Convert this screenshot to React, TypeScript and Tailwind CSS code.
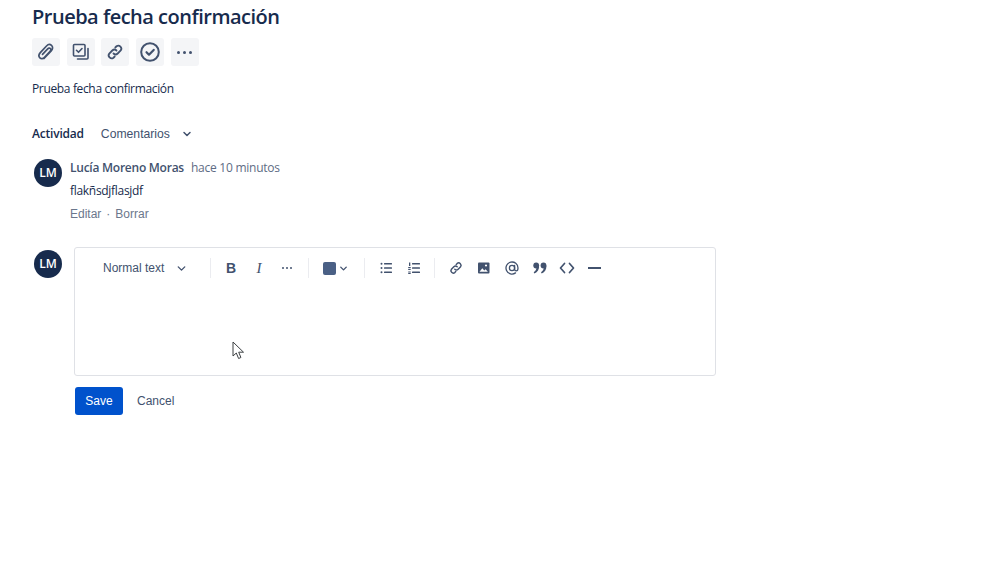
import { ChevronDown } from 'lucide-react';

const sans = { fontFamily: '"Open Sans", sans-serif' };
const arial = { fontFamily: '"Liberation Sans", sans-serif' };

function ActionButton({ children }: { children: React.ReactNode }) {
  return (
    <button className="flex h-[28px] w-[28px] items-center justify-center rounded-[3px] bg-[#f4f5f7] text-[#42526e]">
      {children}
    </button>
  );
}

function Avatar() {
  return (
    <div className="flex h-[28px] w-[28px] shrink-0 items-center justify-center rounded-full bg-[#172b4d] text-[12px] font-semibold text-white">
      LM
    </div>
  );
}

function Divider() {
  return <div className="h-[20px] w-px bg-[#ebecf0]" />;
}

const PaperclipIcon = () => (
  <svg width="20" height="20" viewBox="0 0 20 20" fill="none" stroke="currentColor" strokeWidth="1.7" strokeLinecap="round">
    <path d="M8 16.5l7.2-7.6c1.8-1.9 1.8-4.2.3-5.5-1.5-1.3-3.5-1-5 .6L4.3 10.600c-1.500 1.700-1.700 3.900-.4 5.200 1.300 1.300 3.200 1 4.600-.5l5.600-6c.9-1 1-2.100.3-2.800-.7-.7-1.800-.5-2.700.4L6.500 12.400" />
  </svg>
);

const SubtaskIcon = () => (
  <svg width="20" height="20" viewBox="0 0 20 20" fill="none" stroke="currentColor" strokeWidth="1.6" strokeLinecap="round" strokeLinejoin="round">
    <rect x="2.500" y="2.500" width="11.500" height="11.500" rx="1" />
    <path d="M5.500 8.300l2 2 3.500-3.800" />
    <path d="M17 6.500v9.500a1 1 0 0 1-1 1H6.500" />
  </svg>
);

const LinkIcon = ({ size = 20 }: { size?: number }) => (
  <svg width={size} height={size} viewBox="0 0 20 20" fill="none" stroke="currentColor" strokeWidth="1.8" strokeLinecap="round">
    <path d="M8.500 11.500a3 3 0 0 0 4.200 0l3-3a3 3 0 0 0-4.200-4.200L10.300 5.500" />
    <path d="M11.500 8.500a3 3 0 0 0-4.200 0l-3 3a3 3 0 0 0 4.200 4.200l1.200-1.200" />
  </svg>
);

const CheckCircleIcon = () => (
  <svg width="22" height="22" viewBox="0 0 22 22" fill="none" stroke="currentColor" strokeLinecap="round" strokeLinejoin="round">
    <circle cx="11" cy="11" r="8.800" strokeWidth="2" />
    <path d="M7.500 11.200l2.500 2.500 4.700-4.800" strokeWidth="2.200" />
  </svg>
);

const DotsIcon = ({ size = 3, gap = 3 }: { size?: number; gap?: number }) => (
  <div className="flex items-center" style={{ gap }}>
    {[0, 1, 2].map((i) => (
      <span key={i} className="rounded-full bg-[#42526e]" style={{ width: size, height: size }} />
    ))}
  </div>
);

const BulletListIcon = () => (
  <svg width="16" height="16" viewBox="0 0 16 16" fill="#42526e">
    <circle cx="3.500" cy="3.800" r="1" />
    <circle cx="3.500" cy="8" r="1" />
    <circle cx="3.500" cy="12.200" r="1" />
    <rect x="6" y="3" width="8" height="1.500" rx=".5" />
    <rect x="6" y="7.200" width="8" height="1.500" rx=".5" />
    <rect x="6" y="11.400" width="8" height="1.500" rx=".5" />
  </svg>
);

const NumberListIcon = () => (
  <svg width="16" height="16" viewBox="0 0 16 16" fill="#42526e">
    <rect x="3" y="2.500" width="1.300" height="3.500" />
    <rect x="2.200" y="7" width="2.500" height="1.200" />
    <rect x="2.200" y="9" width="2.500" height="1" />
    <rect x="2.200" y="11.500" width="2.500" height="1" />
    <rect x="2.200" y="13" width="2.500" height="1" />
    <rect x="6" y="3" width="8" height="1.500" rx=".5" />
    <rect x="6" y="7.200" width="8" height="1.500" rx=".5" />
    <rect x="6" y="11.400" width="8" height="1.500" rx=".5" />
  </svg>
);

const ImageIcon = () => (
  <svg width="16" height="16" viewBox="0 0 16 16">
    <rect x="2" y="2.500" width="11.500" height="11" rx="1" fill="#42526e" />
    <path d="M3.500 11.800l2.800-3.600 2 2.300 1.300-1.300 2.300 2.600z" fill="#fff" />
    <circle cx="10" cy="5.500" r="1.100" fill="#fff" />
  </svg>
);

const MentionIcon = () => (
  <svg width="16" height="16" viewBox="0 0 16 16" fill="none" stroke="#42526e" strokeWidth="1.300" strokeLinecap="round">
    <circle cx="8" cy="8" r="2.600" />
    <path d="M10.600 5.500V9c0 1.200.7 1.900 1.600 1.900S14 10 14 8a6 6 0 1 0-2.500 4.900" />
  </svg>
);

const QuoteIcon = () => (
  <svg width="16" height="16" viewBox="0 0 16 16" fill="#42526e">
    <circle cx="4.200" cy="5.500" r="2.900" />
    <path d="M7.100 5.500c.2 3.800-1.500 6.700-4.700 8l-.7-1.300c1.700-1 2.700-2.500 2.800-4.400z" />
    <circle cx="11.500" cy="5.500" r="2.900" />
    <path d="M14.400 5.500c.2 3.800-1.500 6.700-4.700 8L9 12.200c1.700-1 2.700-2.500 2.800-4.400z" />
  </svg>
);

const CodeIcon = () => (
  <svg width="16" height="16" viewBox="0 0 16 16" fill="none" stroke="#42526e" strokeWidth="1.700" strokeLinecap="round" strokeLinejoin="round">
    <path d="M5.500 3.500L1.500 8l4 4.500" />
    <path d="M10.500 3.500l4 4.500-4 4.500" />
  </svg>
);

const Cursor = () => (
  <svg className="absolute left-[232px] top-[341px]" width="13" height="19" viewBox="0 0 13 19">
    <path d="M1 1v14l3.300-3 2.300 5.500 2.300-1L6.700 11.200H11.500z" fill="#fff" stroke="#3c4043" strokeWidth="1" strokeLinejoin="round" />
  </svg>
);

function Toolbar() {
  return (
    <div className="flex h-[40px] items-center text-[#42526e]">
      <div className="ml-[28px] flex w-[107px] items-center text-[12px]" style={arial}>
        <span>Normal text</span>
        <ChevronDown className="ml-[11px]" size={13} strokeWidth={2.500} />
      </div>
      <Divider />
      <div className="ml-[13px] flex w-[84px] items-center gap-[14px]">
        <span className="w-[14px] text-center text-[14px] font-bold leading-none" style={arial}>B</span>
        <span className="w-[14px] text-center text-[15px] italic leading-none" style={{ fontFamily: '"Liberation Serif", serif' }}>I</span>
        <span className="ml-[2px]"><DotsIcon size={2} gap={2} /></span>
      </div>
      <Divider />
      <div className="ml-[14px] flex w-[41px] items-center">
        <div className="h-[13px] w-[13px] rounded-[2px] bg-[#4a6085]" />
        <ChevronDown className="ml-[2px]" size={11} strokeWidth={3} />
      </div>
      <Divider />
      <div className="ml-[13px] flex w-[56px] items-center gap-[12px]">
        <BulletListIcon />
        <NumberListIcon />
      </div>
      <Divider />
      <div className="ml-[13px] flex items-center gap-[12px]">
        <LinkIcon size={16} />
        <ImageIcon />
        <MentionIcon />
        <QuoteIcon />
        <span className="-ml-px"><CodeIcon /></span>
        <div className="ml-px h-[2px] w-[13px] bg-[#42526e]" />
      </div>
    </div>
  );
}

export default function App() {
  return (
    <main className="relative min-h-[562px] bg-white pl-[32px] pt-[3px] text-[#172b4d]" style={sans}>
      <h1 className="text-[20px] font-semibold leading-[28px] tracking-[-0.5px]">Prueba fecha confirmación</h1>

      <div className="mt-[7px] flex gap-[6.7px]">
        <ActionButton><PaperclipIcon /></ActionButton>
        <ActionButton><SubtaskIcon /></ActionButton>
        <ActionButton><LinkIcon /></ActionButton>
        <ActionButton><CheckCircleIcon /></ActionButton>
        <ActionButton><DotsIcon /></ActionButton>
      </div>

      <p className="mt-[14px] text-[12px] leading-[18px] tracking-[-0.35px]">Prueba fecha confirmación</p>

      <div className="mt-[26px] flex h-[20px] items-center text-[12px]">
        <span className="font-semibold tracking-[-0.2px]">Actividad</span>
        <span className="ml-[17px] text-[12.200px] text-[#42526e]" style={arial}>Comentarios</span>
        <ChevronDown className="ml-[11px] text-[#42526e]" size={12} strokeWidth={3} />
      </div>

      <section className="mt-[15px] flex pl-[2px]">
        <Avatar />
        <div className="ml-[8px] text-[12px]">
          <div className="flex h-[18px] items-center tracking-[-0.25px]">
            <span className="font-semibold text-[#42526e]">Lucía Moreno Moras</span>
            <span className="ml-[7px] text-[#5e6c84]">hace 10 minutos</span>
          </div>
          <p className="mt-[5px] leading-[18px] tracking-[-0.3px]">flakñsdjflasjdf</p>
          <div className="mt-[5px] flex h-[18px] items-center text-[#6b778c]" style={arial}>
            <span>Editar</span>
            <span className="mx-[5px]">·</span>
            <span>Borrar</span>
          </div>
        </div>
      </section>

      <section className="mt-[27px] flex pl-[2px]">
        <Avatar />
        <div className="ml-[12px] -mt-[3px]">
          <div className="h-[129px] w-[642px] rounded-[3px] border border-[#dfe1e6]">
            <Toolbar />
          </div>
          <div className="mt-[11px] flex items-center text-[12px]" style={arial}>
            <button className="ml-px h-[28px] w-[48px] rounded-[3px] bg-[#0052cc] text-white">Save</button>
            <span className="ml-[14px] text-[#42526e]">Cancel</span>
          </div>
        </div>
      </section>

      <Cursor />
    </main>
  );
}
